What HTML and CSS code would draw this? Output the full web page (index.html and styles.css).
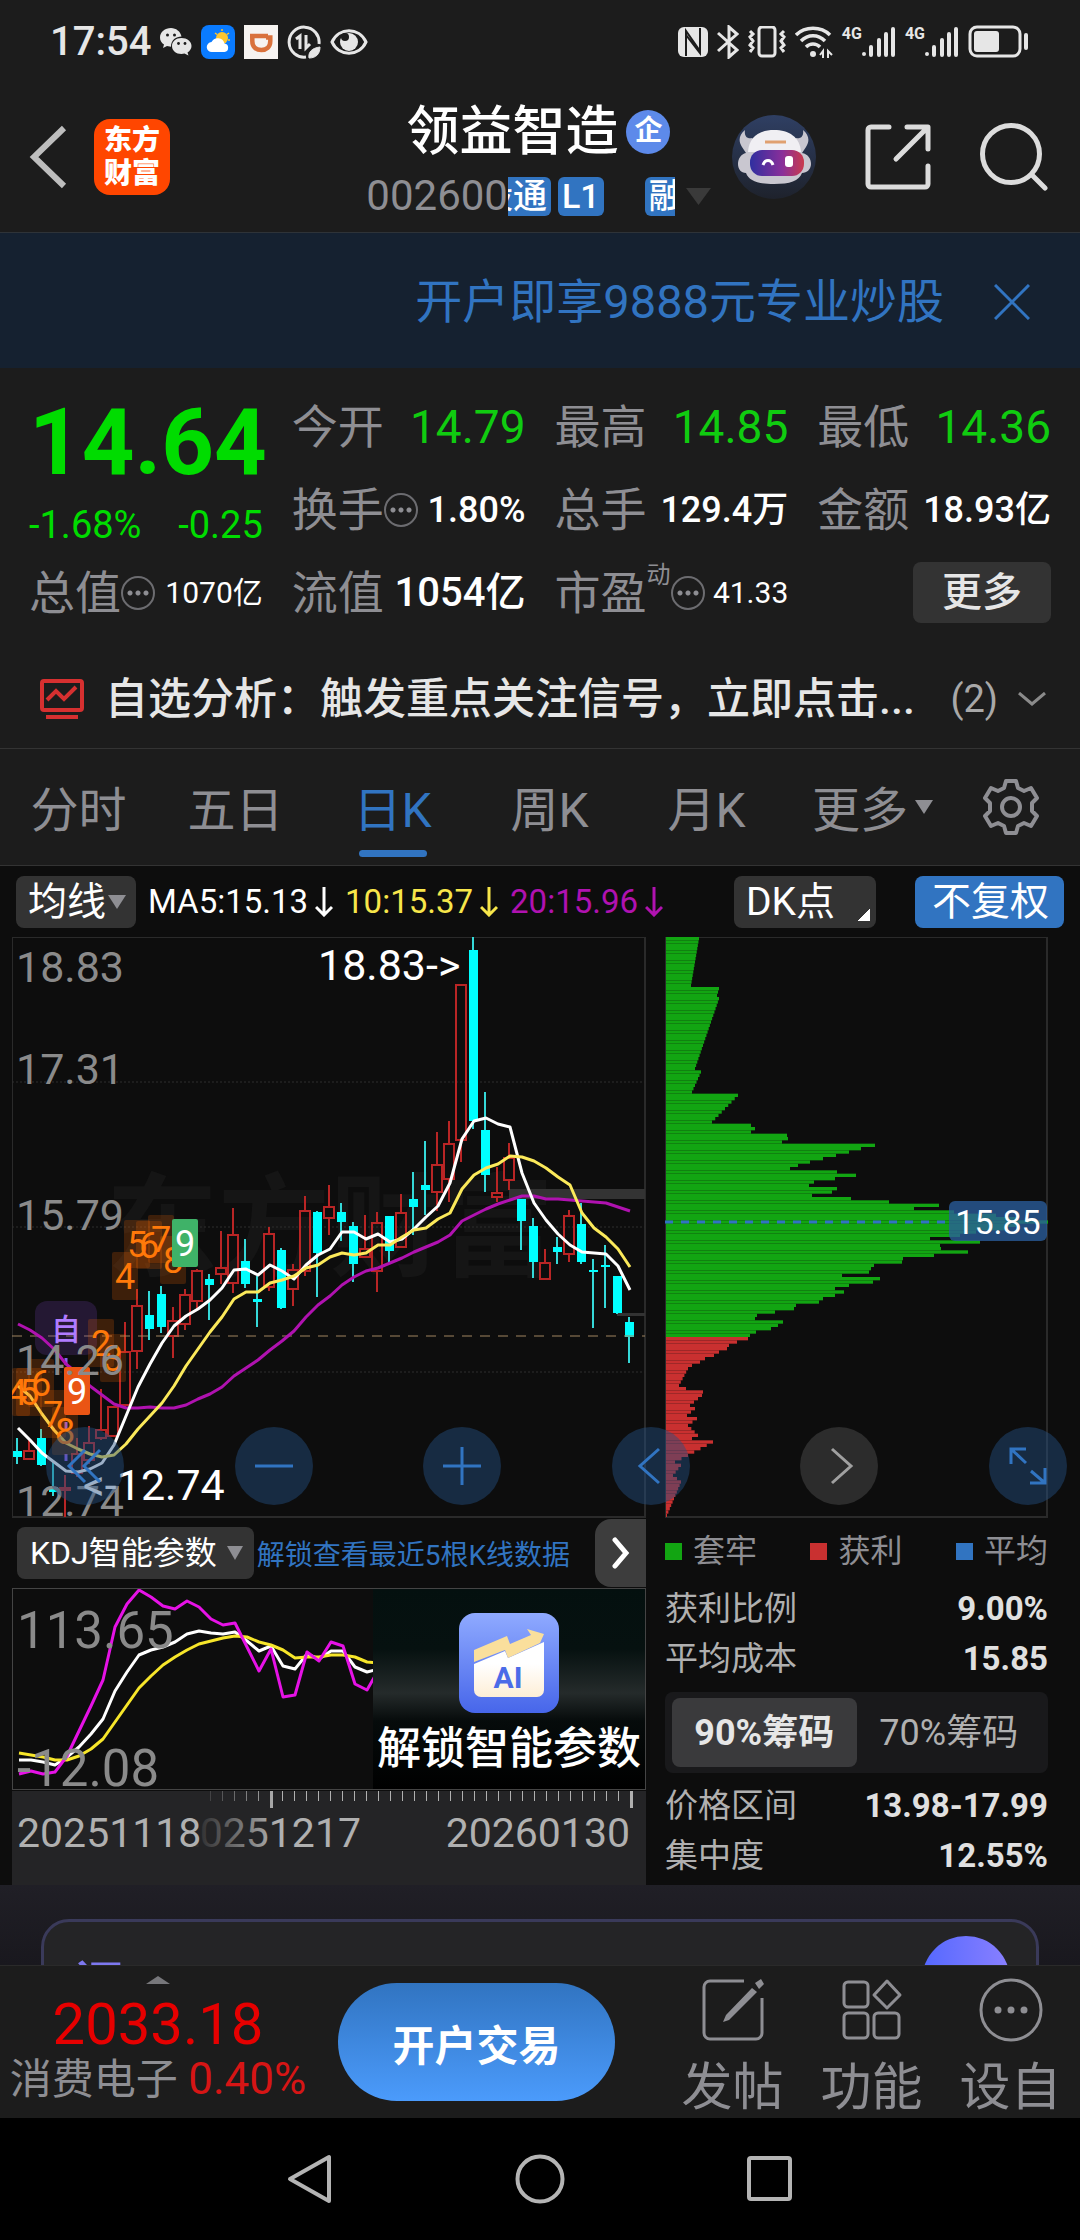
FILE: index.html
```html
<!doctype html>
<html lang="zh-CN">
<head>
<meta charset="utf-8">
<meta name="viewport" content="width=device-width">
<title>领益智造 002600</title>
<link rel="stylesheet" href="styles.css">
</head>
<body>

<div class="status">
  <span class="time">17:54</span>
  <svg width="32" height="28" viewBox="0 0 32 28"><path fill="#e6e6e6" d="M11 0C5 0 0 4 0 9.500c0 3 1.500 5.500 4 7L3 20l4-2 4 .7C11 12 16 8.500 21.500 8.500 20.500 3.500 16 0 11 0z"/><path fill="#e6e6e6" d="M21.500 10C16 10 12 13.500 12 18s4 8 9.500 8l3-.4 4 2-1-3.200c2.500-1.500 4-3.800 4-6.400 0-4.500-4.500-8-10-8z"/><g fill="#1c1c1c"><circle cx="7.500" cy="7" r="1.500"/><circle cx="14.500" cy="7" r="1.500"/><circle cx="18.500" cy="15.500" r="1.400"/><circle cx="25" cy="15.500" r="1.400"/></g></svg>
  <svg width="34" height="34" viewBox="0 0 34 34"><rect width="34" height="34" rx="8" fill="#0a7bff"/><circle cx="21" cy="13" r="6" fill="#ffc62e"/><path stroke="#ffc62e" stroke-width="1.500" d="M21 4v2M14 8l2 1.500M28 8l-2 1.500M29 15h-2"/><path fill="#fff" d="M11 27a5 5 0 0 1-.5-10 7 7 0 0 1 13 1.500 4.300 4.300 0 0 1 0 8.500z"/></svg>
  <svg width="34" height="34" viewBox="0 0 34 34"><rect width="34" height="34" fill="#f6f3f1"/><path fill="none" stroke="#d9713c" stroke-width="4.500" d="M6 11h18M8.300 11v5c0 6 4 9 9 9s9-3 9-9v-3.500H22"/></svg>
  <svg width="34" height="34" viewBox="0 0 34 34" fill="none" stroke="#e6e6e6"><path stroke-width="3" d="M19 32A15 15 0 1 1 32 19"/><path stroke-width="3" d="M9 14l4-3v13M19 10v13l4-4"/><path fill="#e6e6e6" d="M22 33c-1-6 3-10 11-11 0 7-4 11-11 11z"/></svg>
  <svg width="38" height="26" viewBox="0 0 38 26"><path fill="none" stroke="#e6e6e6" stroke-width="3" d="M2 13C9-2 29-2 36 13 29 28 9 28 2 13z"/><circle cx="19" cy="13" r="9" fill="#e6e6e6"/><circle cx="15" cy="8" r="4" fill="#1c1c1c"/></svg>
  <span class="spring"></span>
  <svg width="30" height="30" viewBox="0 0 30 30"><rect width="30" height="30" rx="6" fill="#e6e6e6"/><path fill="none" stroke="#1c1c1c" stroke-width="2" d="M8 29V4l14 20M22 1v25L8 8"/></svg>
  <svg width="22" height="34" viewBox="0 0 22 34"><path fill="none" stroke="#e6e6e6" stroke-width="3" d="M1 8l19 17-8 7V2l8 7L1 26"/></svg>
  <svg width="38" height="32" viewBox="0 0 38 32" fill="none" stroke="#e6e6e6"><rect x="11" y="1" width="16" height="29" rx="3" stroke-width="3"/><path stroke-width="3" d="M2 5l3 3-3 3 3 4-3 4 3 3-3 4M36 5l-3 3 3 3-3 4 3 4-3 3 3 4"/></svg>
  <svg width="38" height="32" viewBox="0 0 38 32" fill="none" stroke="#e6e6e6" stroke-width="3.500"><path d="M1 9c9-9 25-9 34 0M6 15c7-7 17-7 24 0M11 21c4-4 10-4 14 0"/><circle cx="18" cy="28" r="3" fill="#e6e6e6" stroke="none"/><path stroke-width="2" d="M25 29l3-4v7M33 32v-7l4 4"/></svg>
  <span class="net"><small>4G</small><svg width="34" height="32" viewBox="0 0 34 32" stroke="#e6e6e6" stroke-width="4" stroke-linecap="round"><path d="M2 28v0M9 21v8M17 14v15M24 8v21M31 3v26"/></svg></span>
  <span class="net"><small>4G</small><svg width="34" height="32" viewBox="0 0 34 32" stroke="#e6e6e6" stroke-width="4" stroke-linecap="round"><path d="M2 28v0M9 21v8M17 14v15M24 8v21M31 3v26"/></svg></span>
  <svg width="60" height="34" viewBox="0 0 60 34"><rect x="2" y="2" width="50" height="29" rx="7" fill="none" stroke="#e6e6e6" stroke-width="3"/><rect x="6" y="6" width="25" height="21" rx="3" fill="#e6e6e6"/><rect x="56" y="8" width="4" height="17" rx="2" fill="#e6e6e6"/></svg>
</div>

<header class="head">
  <div class="head-left">
    <button aria-label="返回"><svg width="38" height="64" viewBox="0 0 38 64"><path fill="none" stroke="#bdbdbd" stroke-width="6" d="M35 3L5 32l30 29"/></svg></button>
    <div class="logo">东方<br>财富</div>
  </div>
  <div class="title">
    <h1>领益智造<span class="qi">企</span></h1>
    <div class="code"><span>002600</span><span class="tag tag-cut-l"><i>股通</i></span><span class="tag">L1</span><span class="tag tag-cut-r">融</span>
      <svg width="25" height="17" viewBox="0 0 25 17"><path fill="#3a3a3a" d="M0 0h25L12.500 17z"/></svg></div>
  </div>
  <div class="head-right">
    <button aria-label="智能助手"><svg width="84" height="84" viewBox="0 0 84 84">
      <defs><linearGradient id="bg1" x2="0" y2="1"><stop stop-color="#2f3f63"/><stop offset="1" stop-color="#1e222c"/></linearGradient><linearGradient id="visor"><stop stop-color="#2f2fa0"/><stop offset=".6" stop-color="#8a2f9a"/><stop offset="1" stop-color="#c93a4c"/></linearGradient></defs>
      <circle cx="42" cy="42" r="42" fill="url(#bg1)"/>
      <path fill="#c9c7d0" d="M10 32c-4-6-3-12 3-17-1 6 2 9 7 8l4 4c4-2 32-2 36 0l4-4c5 1 8-2 7-8 6 5 7 11 3 17l-4 6c6 1 9 6 9 11s-4 9-9 9c-3 8-12 11-28 11s-25-3-28-11c-5 0-8-4-8-9s3-10 8-11z"/>
      <path fill="#f0eff3" d="M16 37c1-15 11-22 26-22s26 7 27 22z"/>
      <rect x="18" y="35" width="54" height="26" rx="12" fill="url(#visor)"/><path stroke="#e0a070" stroke-width="3" d="M33 27h21"/><path fill="none" stroke="#fff" stroke-width="3" d="M31 50c2-6 8-6 10 0"/><rect x="53" y="41" width="8" height="11" rx="3" fill="#fff"/></svg></button>
    <button aria-label="分享"><svg width="66" height="66" viewBox="0 0 66 66" fill="none" stroke="#dcdcdc" stroke-width="5" stroke-linecap="round" stroke-linejoin="round"><path d="M24 3H6a3 3 0 0 0-3 3v54a3 3 0 0 0 3 3h54a3 3 0 0 0 3-3V42M42 3h21v22M62 4L31 35"/></svg></button>
    <button aria-label="搜索"><svg width="68" height="68" viewBox="0 0 68 68" fill="none" stroke="#dcdcdc" stroke-width="5" stroke-linecap="round"><circle cx="31" cy="31" r="28.500"/><path d="M52 52l13 13"/></svg></button>
  </div>
</header>

<div class="banner">
  <a href="#">开户即享9888元专业炒股</a>
  <button aria-label="关闭"><svg width="36" height="36" viewBox="0 0 36 36"><path stroke="#3174c1" stroke-width="3" d="M1 1l34 34M35 1L1 35"/></svg></button>
</div>

<section class="quote">
  <div class="price">
    <strong>14.64</strong>
    <p><span>-1.68%</span><span>-0.25</span></p>
  </div>
  <div class="cell"><span>今开</span><b class="up">14.79</b></div>
  <div class="cell"><span>最高</span><b class="up">14.85</b></div>
  <div class="cell"><span>最低</span><b class="up">14.36</b></div>
  <div class="cell"><span>换手<i class="tip"></i></span><b>1.80%</b></div>
  <div class="cell"><span>总手</span><b>129.4万</b></div>
  <div class="cell"><span>金额</span><b>18.93亿</b></div>
  <div class="cell"><span>总值<i class="tip"></i></span><b class="sm">1070亿</b></div>
  <div class="cell"><span>流值</span><b class="lg">1054亿</b></div>
  <div class="cell"><span>市盈<sup>动</sup><i class="tip"></i></span><b class="sm">41.33</b></div>
  <div class="cell cell-end"><button class="more">更多</button></div>
</section>

<a class="analysis" href="#">
  <svg width="44" height="40" viewBox="0 0 44 40" fill="none" stroke="#d63030" stroke-width="4"><rect x="2" y="2" width="40" height="29" rx="2"/><path d="M7 21l9-9 8 8 12-12M6 38h32"/></svg>
  <span class="msg">自选分析：触发重点关注信号，立即点击...</span>
  <span class="count">(2)</span>
  <svg width="28" height="14" viewBox="0 0 28 14"><path fill="none" stroke="#8a8a8a" stroke-width="3" d="M1 1l13 11L27 1"/></svg>
</a>

<nav class="tabs">
  <a href="#">分时</a>
  <a href="#">五日</a>
  <a href="#" class="on">日K</a>
  <a href="#">周K</a>
  <a href="#">月K</a>
  <a href="#" class="drop">更多<svg width="18" height="14" viewBox="0 0 18 14"><path fill="#8e8e93" d="M0 0h18L9 14z"/></svg></a>
  <button aria-label="设置"><svg width="58" height="58" viewBox="0 0 58 58" fill="none" stroke="#8e8e93" stroke-width="4" stroke-linejoin="round"><path d="M24 3h10l2 7 6 3 7-3 6 10-5 5v8l5 5-6 10-7-3-6 3-2 7H24l-2-7-6-3-7 3-6-10 5-5v-8l-5-5 6-10 7 3 6-3z"/><circle cx="29" cy="29" r="9"/></svg></button>
</nav>

<main class="board">
  <div class="ma">
    <button class="chip">均线<svg width="18" height="14" viewBox="0 0 18 14"><path fill="#8e8e93" d="M0 0h18L9 14z"/></svg></button>
    <span class="ma5">MA5:15.13<svg class="down" width="18" height="30" viewBox="0 0 18 30"><path d="M9 0v28M1 20l8 8 8-8"/></svg></span>
    <span class="ma10">10:15.37<svg class="down" width="18" height="30" viewBox="0 0 18 30"><path d="M9 0v28M1 20l8 8 8-8"/></svg></span>
    <span class="ma20">20:15.96<svg class="down" width="18" height="30" viewBox="0 0 18 30"><path d="M9 0v28M1 20l8 8 8-8"/></svg></span>
    <span class="spring"></span>
    <button class="chip dk">DK点</button>
    <button class="chip blue">不复权</button>
  </div>

  <div class="charts">
    <svg class="kline" viewBox="0 0 634 581">
      <rect class="frame" x="0" y="0" width="633" height="580"/>
      <text class="water" x="94" y="331">东方财富</text>
      <path class="dots" d="M0 145h633M0 290h633M0 435h633"/>
      <path fill="#333" d="M497 252h136v10H497zM605 376h28v3h-28z"/>
      <g id="candles"></g>
      <path class="last" d="M0 399h633"/>
      <rect x="23" y="364" width="62" height="54" rx="12" fill="#6a3ca8" fill-opacity=".25"/>
      <path stroke="#8a5cf0" stroke-width="3" stroke-dasharray="7 25" d="M54 421v120"/>
      <text class="self" x="54" y="403">自</text>
      <g id="lines"></g>
      <g id="marks"></g>
      <g class="axis"><text x="4" y="45">18.83</text><text x="4" y="147">17.31</text><text x="4" y="293">15.79</text><text x="4" y="438">14.26</text><text x="4" y="579">12.74</text></g>
      <g class="peak"><text x="306" y="43">18.83-&gt;</text><text x="71" y="563">&lt;-12.74</text></g>
    </svg>
    <svg class="chips" viewBox="0 0 383 581">
      <rect class="frame" x="0" y="0" width="382" height="580"/>
      <g id="bars"></g>
      <path stroke="#3174c1" stroke-width="3" stroke-dasharray="8 8" d="M0 285h284"/>
      <rect x="284" y="264" width="98" height="40" rx="6" fill="#2a5d9c" fill-opacity=".78"/>
      <text class="avg" x="333" y="297">15.85</text>
    </svg>
    <div class="pads">
      <button aria-label="最左"><svg width="40" height="40" viewBox="0 0 40 40"><path d="M20 4L4 20l16 16M35 4L19 20l16 16"/></svg></button>
      <button aria-label="缩小"><svg width="40" height="40" viewBox="0 0 40 40"><path d="M1 20h38"/></svg></button>
      <button aria-label="放大"><svg width="40" height="40" viewBox="0 0 40 40"><path d="M1 20h38M20 1v38"/></svg></button>
      <button aria-label="左移"><svg width="40" height="40" viewBox="0 0 40 40"><path d="M28 3L9 20l19 17"/></svg></button>
      <button class="off" aria-label="右移"><svg width="40" height="40" viewBox="0 0 40 40"><path d="M13 3l19 17-19 17"/></svg></button>
      <button aria-label="全屏"><svg width="40" height="40" viewBox="0 0 40 40"><path d="M18 3H3v15M3 3l15 14M37 22v15H22M37 37L23 25"/></svg></button>
    </div>
  </div>

  <div class="lower">
    <div class="kdj">
      <div class="kdj-bar">
        <button class="chip">KDJ智能参数<svg width="16" height="14" viewBox="0 0 16 14"><path fill="#8e8e93" d="M0 0h16L8 14z"/></svg></button>
        <a href="#">解锁查看最近5根K线数据</a>
        <button class="next" aria-label="下一个"><svg width="18" height="32" viewBox="0 0 18 32"><path fill="none" stroke="#fff" stroke-width="5" stroke-linecap="round" d="M3 3l11 13L3 29"/></svg></button>
      </div>
      <div class="kdj-chart">
        <svg viewBox="0 0 360 200">
          <g id="kdj"></g>
          <g class="axis big"><text x="4" y="59">113.65</text><text x="4" y="197">-12.08</text></g>
        </svg>
        <a class="unlock" href="#">
          <svg width="100" height="100" viewBox="0 0 100 100">
            <defs><linearGradient id="ai" x2="0" y2="1"><stop stop-color="#8faaff"/><stop offset="1" stop-color="#4766ea"/></linearGradient><linearGradient id="paper" x2="0" y2="1"><stop offset=".4" stop-color="#fff"/><stop offset="1" stop-color="#fdeed6"/></linearGradient></defs>
            <rect width="100" height="100" rx="16" fill="url(#ai)"/>
            <path fill="url(#paper)" d="M15 51l31-13 3 7 36-16v48a7 7 0 0 1-7 7H22a7 7 0 0 1-7-7z"/>
            <path fill="#fadf9c" d="M15 37l33-14 3 8 21-9-4-6 17 5-4 9-32 15-3-8-31 12z"/>
            <text x="49" y="75">AI</text>
          </svg>
          <span>解锁智能参数</span>
        </a>
      </div>
      <svg class="dates" viewBox="0 0 634 94">
        <defs><linearGradient id="fade" gradientUnits="userSpaceOnUse" x1="180" x2="265"><stop stop-color="#b0b0b0" stop-opacity="0"/><stop offset="1" stop-color="#b0b0b0"/></linearGradient></defs>
        <g id="ticks" fill="url(#fade)"></g>
        <text x="5" y="56">20251118</text><text x="349" y="56" fill="url(#fade)" text-anchor="end">20251217</text><text x="618" y="56" text-anchor="end">20260130</text>
      </svg>
    </div>

    <div class="cost">
      <ul>
        <li class="g">套牢</li>
        <li class="r">获利</li>
        <li class="b">平均</li>
      </ul>
      <dl><dt>获利比例</dt><dd>9.00%</dd></dl>
      <dl><dt>平均成本</dt><dd>15.85</dd></dl>
      <div class="switch"><button class="on">90%筹码</button><button>70%筹码</button></div>
      <dl><dt>价格区间</dt><dd>13.98-17.99</dd></dl>
      <dl><dt>集中度</dt><dd>12.55%</dd></dl>
    </div>
  </div>
</main>

<div class="peek">
  <div class="ask"><b>问Ai</b><span class="ball"></span></div>
</div>

<footer class="foot">
  <a class="index" href="#">
    <svg width="24" height="8" viewBox="0 0 24 8"><path fill="#77777b" d="M12 0l12 8H0z"/></svg>
    <strong>2033.18</strong>
    <span>消费电子 <em>0.40%</em></span>
  </a>
  <button class="trade">开户交易</button>
  <a class="act" href="#"><svg width="64" height="64" viewBox="0 0 64 64"><path d="M43 3H9a6 6 0 0 0-6 6v46a6 6 0 0 0 6 6h46a6 6 0 0 0 6-6V20"/><path fill="#8e8e93" stroke="none" d="M54 5l6-4 3 5-5 5zM51 10l5 4-28 28-6 2 3-7z"/></svg>发帖</a>
  <a class="act" href="#"><svg width="64" height="64" viewBox="0 0 64 64"><rect x="4" y="4" width="24" height="25" rx="4"/><rect x="4" y="35" width="24" height="25" rx="4"/><rect x="34" y="35" width="25" height="25" rx="4"/><path stroke-linejoin="round" d="M47 3l13 14-13 13-13-13z"/></svg>功能</a>
  <a class="act" href="#"><svg width="64" height="64" viewBox="0 0 64 64"><circle cx="32" cy="32" r="30"/><g fill="#8e8e93" stroke="none"><circle cx="19" cy="32" r="3.500"/><circle cx="32" cy="32" r="3.500"/><circle cx="45" cy="32" r="3.500"/></g></svg>设自</a>
</footer>

<div class="sysnav">
  <button aria-label="返回"><svg width="50" height="50" viewBox="0 0 50 50"><path d="M44 3v44L5 25z"/></svg></button>
  <button aria-label="主页"><svg width="50" height="50" viewBox="0 0 50 50"><circle cx="25" cy="25" r="22.500"/></svg></button>
  <button aria-label="最近"><svg width="50" height="50" viewBox="0 0 50 50"><rect x="4" y="4" width="41" height="41" rx="2"/></svg></button>
</div>

<script src="chart.js"></script>
</body>
</html>
```
FILE: styles.css
```css
* { box-sizing: border-box; }
body {
  margin: 0;
  background: #000;
  color: #fff;
  font-family: Roboto, "Noto Sans CJK SC", sans-serif;
}
a { color: inherit; text-decoration: none; }
button {
  border: 0;
  padding: 0;
  background: none;
  color: inherit;
  font: inherit;
}
svg { display: block; flex: none; }
h1, p, ul, dl, dd { margin: 0; padding: 0; }
i, em { font-style: normal; }
.spring { flex: 1; }

/* status bar */
.status {
  display: flex;
  align-items: center;
  gap: 9px;
  height: 84px;
  padding: 0 52px 0 50px;
  background: #1c1c1c;
}
.time { font-size: 40px; line-height: 44px; font-weight: 500; color: #e6e6e6; }
.net { display: flex; align-items: flex-start; }
.net small { font-size: 16px; line-height: 16px; font-weight: 700; color: #e6e6e6; }

/* header */
.head {
  display: grid;
  grid-template-columns: 1fr auto 1fr;
  height: 149px;
  padding: 0 32px 0 29px;
  background: #1c1c1c;
  border-bottom: 1px solid #2e3338;
}
.head-left, .head-right { display: flex; align-items: center; padding-bottom: 3px; }
.head-left { gap: 27px; }
.head-right { justify-content: flex-end; gap: 49px; }
.logo {
  width: 76px;
  height: 76px;
  padding-top: 5px;
  border-radius: 16px;
  background: #ff4600;
  font-size: 28px;
  line-height: 33px;
  font-weight: 900;
  text-align: center;
}
.title { padding-top: 18px; }
.title h1 {
  display: flex;
  justify-content: center;
  align-items: center;
  gap: 8px;
  font-size: 53px;
  line-height: 60px;
  font-weight: 500;
}
.qi {
  width: 44px;
  height: 44px;
  border-radius: 50%;
  background: #5d8aea;
  font-size: 28px;
  line-height: 42px;
  font-weight: 700;
  text-align: center;
}
.code {
  display: flex;
  align-items: center;
  height: 40px;
  margin-top: 14px;
  color: #8e8e93;
  font-size: 42px;
  line-height: 40px;
}
.tag {
  height: 39px;
  margin-right: 7px;
  padding: 0 4px;
  overflow: hidden;
  border-radius: 6px;
  background: #3174c1;
  color: #fff;
  font-size: 34px;
  line-height: 39px;
  font-weight: 500;
}
.tag-cut-l {
  display: flex;
  justify-content: flex-end;
  width: 43px;
  border-radius: 0 6px 6px 0;
}
.tag-cut-l i { flex: none; }
.tag-cut-r {
  width: 30px;
  margin: 0 11px 0 34px;
  border-radius: 6px 0 0 6px;
}

/* promo banner */
.banner {
  display: flex;
  justify-content: flex-end;
  align-items: center;
  gap: 50px;
  height: 135px;
  padding: 2px 50px 0;
  background: #152130;
  color: #3174c1;
  font-size: 47px;
  line-height: 60px;
}

/* quote */
.quote {
  display: grid;
  grid-template-columns: repeat(4, minmax(0, 1fr));
  grid-auto-rows: 83px;
  column-gap: 29px;
  padding: 17px 29px 14px;
  background: #1c1c1c;
}
.price { grid-row: span 2; color: #00dc00; }
.price strong {
  display: block;
  padding-top: 12px;
  font-size: 92px;
  line-height: 92px;
  font-weight: 700;
}
.price p {
  display: flex;
  justify-content: space-between;
  padding-top: 12px;
  font-size: 38px;
  line-height: 48px;
}
.cell {
  display: flex;
  justify-content: space-between;
  align-items: center;
  white-space: nowrap;
  line-height: 60px;
}
.cell span {
  display: flex;
  align-items: center;
  color: #8e8e93;
  font-size: 46px;
}
.cell sup { align-self: flex-start; font-size: 24px; line-height: 24px; }
.cell b { font-size: 36px; font-weight: 500; }
.cell .up { color: #10cc10; font-size: 46px; font-weight: 400; }
.cell .sm { font-size: 30px; font-weight: 400; }
.cell .lg { font-size: 40px; }
.cell-end { justify-content: flex-end; }
.tip {
  width: 34px;
  height: 34px;
  border: 2px solid #6c6c70;
  border-radius: 50%;
  background: radial-gradient(circle, #8e8e93 2px, transparent 3px) 50% 50% / 8px 30px;
  background-clip: content-box;
  padding: 0 3px;
}
.more {
  width: 138px;
  height: 61px;
  border-radius: 8px;
  background: #333;
  color: #e6e6e6;
  font-size: 40px;
  font-weight: 500;
}

.analysis {
  display: flex;
  align-items: center;
  height: 101px;
  padding: 2px 34px 0 40px;
  background: #1c1c1c;
  border-bottom: 1px solid #333;
  font-size: 43px;
  line-height: 60px;
}
.msg { flex: 1; padding-left: 21px; color: #e6e6e6; font-weight: 500; white-space: nowrap; }
.count { padding-right: 20px; color: #a8a8a8; font-size: 38px; }

/* period tabs */
.tabs {
  display: flex;
  height: 117px;
  background: #1c1c1c;
  border-bottom: 1px solid #333;
  color: #8e8e93;
  font-size: 48px;
  line-height: 60px;
}
.tabs a {
  display: flex;
  flex: 157;
  justify-content: center;
  align-items: center;
  gap: 7px;
  padding-top: 8px;
  white-space: nowrap;
  position: relative;
}
.tabs .drop svg { margin: 0 -18px 8px 0; }
.tabs button { display: flex; flex: 138; justify-content: center; align-items: center; }
.tabs .on { color: #3174c1; }
.tabs .on::after {
  content: "";
  position: absolute;
  bottom: 8px;
  width: 68px;
  height: 7px;
  border-radius: 4px;
  background: #3174c1;
}

/* charts */
.board { background: #0d0d0d; }
.ma {
  display: flex;
  align-items: center;
  gap: 12px;
  height: 71px;
  padding: 0 16px;
  font-size: 33px;
  line-height: 50px;
  white-space: nowrap;
}
.ma span { display: flex; align-items: center; gap: 7px; }
.down { fill: none; stroke: currentColor; stroke-width: 3; }
.ma5 { color: #fff; }
.ma10 { color: #f7e64a; }
.ma20 { color: #b012b0; }
.chip {
  display: flex;
  align-items: center;
  gap: 2px;
  height: 52px;
  padding: 0 10px 0 12px;
  border-radius: 8px;
  background: #333;
  font-size: 39px;
  line-height: 52px;
  white-space: nowrap;
}
.ma .dk {
  width: 142px;
  margin-right: 27px;
  background: linear-gradient(135deg, transparent 50%, #fff 50%) no-repeat 124px 33px / 12px 12px, #333;
}
.ma .blue { justify-content: center; width: 149px; background: #3174c1; }

.charts {
  position: relative;
  display: grid;
  grid-template-columns: 634fr 383fr;
  gap: 19px;
  padding: 0 32px 0 12px;
}
.charts > svg { width: 100%; }
.frame { fill: none; stroke: #2a2a2a; stroke-width: 2; }
.dots { stroke: #2e2e2e; stroke-width: 1; stroke-dasharray: 2 2; }
.last { stroke: #a08560; stroke-width: 1; stroke-dasharray: 10 8; }
.water { fill: #151515; font-size: 112px; font-weight: 700; }
.axis text { fill: #8a8a8a; font-size: 43px; }
.axis.big text { font-size: 51px; }
.peak text { fill: #fff; font-size: 43px; }
.self { fill: #b07cff; font-size: 30px; font-weight: 500; text-anchor: middle; }
.mark { font-size: 36px; text-anchor: middle; }
.avg { fill: #fff; font-size: 34px; text-anchor: middle; }
.line { fill: none; stroke-width: 3; stroke-linejoin: round; }
.pads {
  position: absolute;
  left: 46px;
  right: 13px;
  bottom: 13px;
  display: flex;
  justify-content: space-between;
}
.pads button {
  display: grid;
  place-items: center;
  width: 78px;
  height: 78px;
  border-radius: 50%;
  background: rgba(36, 80, 130, .45);
}
.pads svg { fill: none; stroke: #3174c1; stroke-width: 3; }
.pads .off { background: #2c2c2c; }
.pads .off svg { stroke: #a0a0a0; }

.lower {
  display: grid;
  grid-template-columns: 634fr 383fr;
  gap: 19px;
  padding: 0 32px 0 12px;
}
.kdj { min-width: 0; }
.kdj-bar {
  display: flex;
  align-items: center;
  height: 70px;
  padding-left: 5px;
  color: #3174c1;
  font-size: 28px;
}
.kdj-bar .chip { gap: 10px; padding: 0 11px 0 13px; color: #fff; font-size: 32px; }
.kdj-bar a { flex: 1; padding-left: 3px; white-space: nowrap; }
.kdj-bar .next {
  display: grid;
  place-items: center;
  width: 51px;
  height: 68px;
  border-radius: 16px 0 0 16px;
  background: #3d3d3d;
}
.kdj-chart {
  display: grid;
  grid-template-columns: 360fr 272fr;
  border: 1px solid #444;
}
.unlock {
  display: flex;
  flex-direction: column;
  align-items: center;
  padding-top: 24px;
  background: linear-gradient(#04100f 0, #061110 30%, #252b2b 52%, #060b0b 66%, #000 100%);
  font-size: 44px;
  line-height: 60px;
  font-weight: 500;
  white-space: nowrap;
}
.unlock span { padding-top: 6px; }
.unlock text { fill: #4b6be8; font-size: 30px; font-weight: 700; text-anchor: middle; }
.dates { width: 100%; margin-top: 1px; background: #242426; }
.dates text { fill: #b0b0b0; font-size: 41px; }
.dates text[fill] { fill: url(#fade); }

.cost { font-size: 33px; line-height: 50px; color: #b0b0b0; }
.cost ul {
  display: flex;
  justify-content: space-between;
  height: 66px;
  padding-top: 8px;
  list-style: none;
  color: #8e8e93;
  font-size: 32px;
}
.cost li { display: flex; align-items: center; gap: 11px; height: 50px; }
.cost li::before { content: ""; width: 17px; height: 17px; background: #12a512; }
.cost .r::before { background: #c93030; }
.cost .b::before { background: #3174c1; }
.cost dl { display: flex; justify-content: space-between; }
.cost dd { color: #e0e0e0; font-weight: 700; }
.switch {
  display: flex;
  height: 81px;
  margin: 8px 0;
  padding: 6px 7px;
  border-radius: 8px;
  background: #19191b;
  font-size: 36px;
}
.switch button { flex: 1; border-radius: 8px; }
.switch .on { background: #3a3a3c; color: #e6e6e6; font-weight: 700; }

/* assistant box, cut off by the footer */
.peek {
  height: 80px;
  padding: 34px 41px 0;
  overflow: hidden;
  background: linear-gradient(#201f26, #19181e);
}
.ask {
  display: flex;
  justify-content: space-between;
  height: 130px;
  padding: 14px 26px 0 30px;
  border: 3px solid #3a3a5a;
  border-radius: 28px;
  background: #242426;
}
.ask b { padding-top: 20px; color: #7d78f0; font-size: 50px; line-height: 60px; }
.ball {
  width: 88px;
  height: 88px;
  border-radius: 50%;
  background: linear-gradient(90deg, #5468ff, #8a80ff);
}

/* footer */
.foot {
  display: grid;
  grid-template-columns: 316px 277px 1fr 139px 139px 139px;
  align-items: center;
  height: 153px;
  background: #1c1c1c;
  border-top: 1px solid #2a2a2a;
  color: #8e8e93;
}
.index {
  display: flex;
  flex-direction: column;
  align-items: center;
  align-self: start;
  padding-top: 10px;
  font-size: 42px;
  line-height: 50px;
  white-space: nowrap;
}
.index strong { padding-top: 10px; color: #e60000; font-size: 58px; line-height: 60px; font-weight: 400; }
.index em { color: #d61515; font-size: 44px; }
.trade {
  grid-column: 2;
  width: 277px;
  height: 118px;
  margin-left: 22px;
  border-radius: 59px;
  background: linear-gradient(#3174c1, #4b9bfc);
  color: #fff;
  font-size: 42px;
  font-weight: 700;
}
.act {
  display: flex;
  flex-direction: column;
  align-items: center;
  padding-top: 12px;
  font-size: 51px;
  line-height: 60px;
}
.act:nth-of-type(2) { grid-column: 4; }
.act svg { margin-bottom: 16px; fill: none; stroke: #8e8e93; stroke-width: 3; }

.sysnav {
  display: flex;
  justify-content: center;
  height: 122px;
}
.sysnav button { display: grid; place-items: center; width: 230px; }
.sysnav svg { fill: none; stroke: #b4b4b4; stroke-width: 4; stroke-linejoin: round; }
```
FILE: chart.js
```js
var NS = 'http://www.w3.org/2000/svg';
function add(id, tag, attrs, text) {
  var el = document.createElementNS(NS, tag);
  for (var k in attrs) el.setAttribute(k, attrs[k]);
  if (text) el.textContent = text;
  document.getElementById(id).appendChild(el);
}

// one row per day: high, body top, body bottom, low, 1 = rising
var days = [
  [501,514,520,527,0],[503,514,522,523,1],[492,501,528,529,0],[524,550,555,559,0],[538,551,553,580,1],
  [501,517,536,540,1],[489,506,523,527,1],[452,493,501,503,1],[470,470,499,499,1],[385,415,468,471,1],
  [352,369,414,432,1],[354,378,392,403,0],[349,357,390,396,0],[370,384,399,421,1],[352,358,387,393,1],
  [332,334,364,372,1],[337,342,348,383,0],[294,331,337,347,1],[271,298,346,356,1],[302,324,347,351,0],
  [339,362,365,390,0],[290,297,350,354,1],[311,313,371,372,0],[327,333,352,369,1],[259,274,334,339,1],
  [274,275,316,360,0],[248,270,281,298,1],[266,275,285,304,0],[285,289,327,345,0],[278,312,320,321,1],
  [275,286,334,355,1],[279,279,314,326,0],[257,276,310,311,1],[235,262,270,298,0],[204,248,253,278,0],
  [195,228,255,274,1],[184,207,242,265,1],[47,48,203,225,1],[0,13,184,192,0],[155,193,238,255,0],
  [230,256,260,265,1],[206,221,243,253,1],[262,262,284,313,0],[281,289,325,341,0],[312,326,342,343,1],
  [300,310,315,327,0],[273,279,317,325,1],[266,287,325,327,0],[322,333,334,391,0],[308,328,329,371,0],
  [339,339,376,377,0],[380,385,400,426,0]
];
days.forEach(function (d, i) {
  var x = 5 + 12 * i;
  if (d[4]) {
    add('candles', 'path', {fill: 'none', stroke: '#b92525', 'stroke-width': 2,
      d: 'M' + x + ' ' + d[0] + 'V' + d[1] + 'M' + x + ' ' + d[2] + 'V' + d[3] +
         'M' + (x - 5) + ' ' + d[1] + 'h10V' + d[2] + 'h-10z'});
  } else {
    add('candles', 'rect', {fill: '#35d8d8', x: x - 1, y: d[0], width: 2, height: d[3] - d[0]});
    add('candles', 'rect', {fill: '#00ffff', x: x - 4, y: d[1], width: 9, height: Math.max(2, d[2] - d[1])});
  }
});

function line(id, ys, color) {
  var pts = ys.map(function (y, i) { return (6 + 12 * i) + ',' + y; });
  add(id, 'polyline', {'class': 'line', points: pts.join(' '), stroke: color});
}
line('lines', [387,393,401,412,427,437,449,458,467,471,471,470,471,471,468,462,457,450,439,431,423,413,404,394,380,368,359,348,340,334,331,326,321,315,310,305,298,284,278,272,267,263,259,259,262,262,263,264,265,266,270,274], '#b012b0');
line('lines', [491,503,516,525,534,535,532,526,508,479,450,427,406,389,379,372,363,351,333,332,338,328,334,342,328,318,312,295,295,302,297,305,302,292,280,269,246,202,184,181,187,190,236,266,283,297,308,315,316,317,329,353], '#fff');
line('lines', [449,459,477,493,506,512,517,520,518,507,492,479,466,449,429,412,395,380,362,355,355,346,343,339,331,328,320,316,318,316,308,308,300,293,291,282,276,252,238,231,227,219,220,224,231,240,248,276,291,300,312,330], '#fbe95a');

// nine-turn counters
[[4,455],[5,455],[6,446],[7,477],[8,494],[9,454,'#ea5514'],[1,443],[2,406],[3,421],
 [4,339],[5,307],[6,308],[7,302],[8,323],[9,306,'#3fb268']].forEach(function (m, i) {
  if (m[0] == 1) return;
  var x = 5 + 12 * i;
  var left = Math.max(0, x - 13);
  add('marks', 'rect', {x: left, y: m[1] - 24, width: x + 13 - left, height: 48, rx: 2,
    fill: m[2] || '#ff6a00', 'fill-opacity': m[2] ? 1 : .2});
  add('marks', 'text', {'class': 'mark', x: x, y: m[1] + 13, fill: m[2] ? '#fff' : '#ff7a0a'}, m[0]);
});

// chip distribution: [row, width], rows between two stops are interpolated
var stops = [[0,33],[14,25],[15,53],[17,51],[18,53],[39,29],[40,35],[46,26],[47,72],[55,46],[56,85],[57,89],[58,85],
  [59,121],[60,122],[61,116],[62,209],[63,195],[64,183],[65,170],[66,157],[67,144],[68,132],[69,124],[70,171],[71,190],
  [72,169],[73,148],[74,143],[75,171],[76,166],[77,146],[78,185],[79,223],[80,273],[81,248],[82,288],[83,330],[84,350],
  [85,382],[86,350],[87,340],[88,310],[89,294],[90,264],[91,314],[92,274],[93,275],[94,302],[95,268],[96,237],[97,236],
  [98,208],[99,205],[100,203],[101,176],[102,214],[103,207],[104,183],[105,169],[106,178],[107,169],[108,157],[109,153],
  [110,130],[111,128],[112,109],[113,91],[114,89],[115,117],[116,112],[117,105],[118,90],[119,84],[120,82],[121,71],
  [122,63],[123,61],[124,53],[125,48],[126,39],[127,34],[128,26],[129,22],[134,13],[135,20],[136,37],[137,36],[140,24],
  [141,29],[143,21],[144,31],[146,22],[149,32],[150,26],[151,47],[155,22],[157,9],[158,15],[161,7],[163,15],[173,1]];
var rowH = 580 / 174;
for (var s = 0; s < stops.length; s++) {
  var a = stops[s], b = stops[s + 1] || [174, 1];
  for (var r = a[0]; r < b[0]; r++) {
    var w = a[1] + (b[1] - a[1]) * (r - a[0]) / (b[0] - a[0]);
    add('bars', 'rect', {x: 1, y: r * rowH, width: w, height: rowH, fill: r < 120 ? '#12a512' : '#c93030'});
  }
}

line('kdj', [171,171,173,176,168,158,145,130,102,83,66,61,58,53,45,42,44,45,43,52,62,57,77,80,65,70,62,62,78,83,80], '#fff');
line('kdj', [164,166,168,171,171,167,160,150,133,116,99,87,76,68,61,55,52,49,47,48,53,56,61,69,68,68,66,66,68,73,74], '#f7e62a');
line('kdj', [185,182,185,183,167,142,117,91,38,15,1,8,17,20,12,18,30,36,34,58,82,60,108,106,63,72,53,57,95,101,80], '#e612e6');

for (var t = 0; t <= 35; t++) {
  var big = t == 5 || t == 35;
  add('ticks', 'rect', {x: 198 + 12 * t, y: 0, width: big ? 3 : 1, height: big ? 17 : 10});
}
```
